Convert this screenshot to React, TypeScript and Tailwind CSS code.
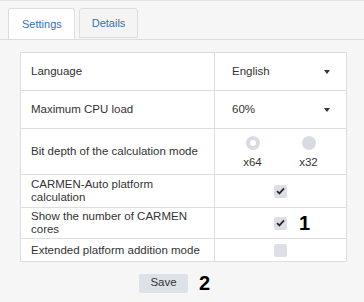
import React from "react";

const Caret = () => (
  <span className="w-0 h-0 border-l-[3.5px] border-r-[3.5px] border-t-[4px] border-l-transparent border-r-transparent border-t-[#333]" />
);

const Check = ({ checked }: { checked: boolean }) => (
  <span className="w-[13px] h-[13px] rounded-[2px] bg-[#dcdfe6] flex items-center justify-center">
    {checked && (
      <svg width="9" height="8" viewBox="0 0 9 8">
        <path d="M1 4.2 L3.4 6.4 L8 1.4" stroke="#2b2b2b" strokeWidth="1.8" fill="none" />
      </svg>
    )}
  </span>
);

const rows = [
  { label: "Language", h: "h-[38px]", kind: "select", value: "English" },
  { label: "Maximum CPU load", h: "h-[38px]", kind: "select", value: "60%" },
  { label: "Bit depth of the calculation mode", h: "h-[46px]", kind: "radio" },
  { label: "CARMEN-Auto platform calculation", h: "h-[33px]", kind: "check", checked: true },
  { label: "Show the number of CARMEN cores", h: "h-[31px]", kind: "check", checked: true, mark: "1" },
  { label: "Extended platform addition mode", h: "h-[22px]", kind: "check", checked: false, last: true },
];

export default function App() {
  return (
    <div className="w-[364px] h-[302px] bg-[#f6f6f6] border-t border-[#e4e4e4] text-[#333] font-['Liberation_Sans',Arial,sans-serif] overflow-hidden">
      {/* tabs */}
      <div className="flex gap-[4px] pl-[8px] pt-[7px] border-b border-[#dddddd] h-[39px]">
        <div className="h-[31px] pl-[13px] pr-[12px] flex items-center bg-white border border-b-0 border-[#dddddd] rounded-t-[3px] text-[11px] text-[#2f73b3]">
          Settings
        </div>
        <div className="h-[30px] px-[12px] flex items-center bg-[#f4f4f4] border border-[#dddddd] rounded-t-[3px] text-[11px] text-[#2f73b3]">
          Details
        </div>
      </div>

      {/* settings table */}
      <div className="ml-[20px] mt-[12px] w-[327px] bg-white border border-[#dedede] text-[11.5px] leading-[13px]">
        {rows.map((r) => (
          <div key={r.label} className={`flex ${r.h} ${r.last ? "" : "border-b border-[#dedede]"}`}>
            <div className="w-[194px] border-r border-[#dedede] flex items-center pl-[10px] pr-[12px]">
              {r.label}
            </div>
            <div className="flex-1 flex items-center">
              {r.kind === "select" && (
                <div className="flex-1 flex items-center justify-between pl-[17px] pr-[16px]">
                  <span>{r.value}</span>
                  <Caret />
                </div>
              )}
              {r.kind === "radio" && (
                <div className="flex-1 flex justify-center gap-[28px] pt-[2px]">
                  <div className="flex flex-col items-center w-[28px]">
                    <span className="w-[14px] h-[14px] rounded-full bg-[#d8dbe2] flex items-center justify-center">
                      <span className="w-[6px] h-[6px] rounded-full bg-white" />
                    </span>
                    <span className="mt-[6px]">x64</span>
                  </div>
                  <div className="flex flex-col items-center w-[28px]">
                    <span className="w-[14px] h-[14px] rounded-full bg-[#d8dbe2]" />
                    <span className="mt-[6px]">x32</span>
                  </div>
                </div>
              )}
              {r.kind === "check" && (
                <div className="flex-1 flex justify-center">
                  <div className="relative">
                    <Check checked={!!r.checked} />
                    {r.mark && (
                      <span className="absolute left-[25px] top-[-4px] text-[20px] leading-[20px] font-bold text-black">
                        {r.mark}
                      </span>
                    )}
                  </div>
                </div>
              )}
            </div>
          </div>
        ))}
      </div>

      {/* save */}
      <div className="flex items-center ml-[139px] mt-[11px]">
        <button className="w-[49px] h-[19px] bg-[#dde1e8] rounded-[2px] text-[11.5px] text-[#333]">Save</button>
        <span className="ml-[11px] text-[20px] leading-[20px] font-bold text-black">2</span>
      </div>
    </div>
  );
}
